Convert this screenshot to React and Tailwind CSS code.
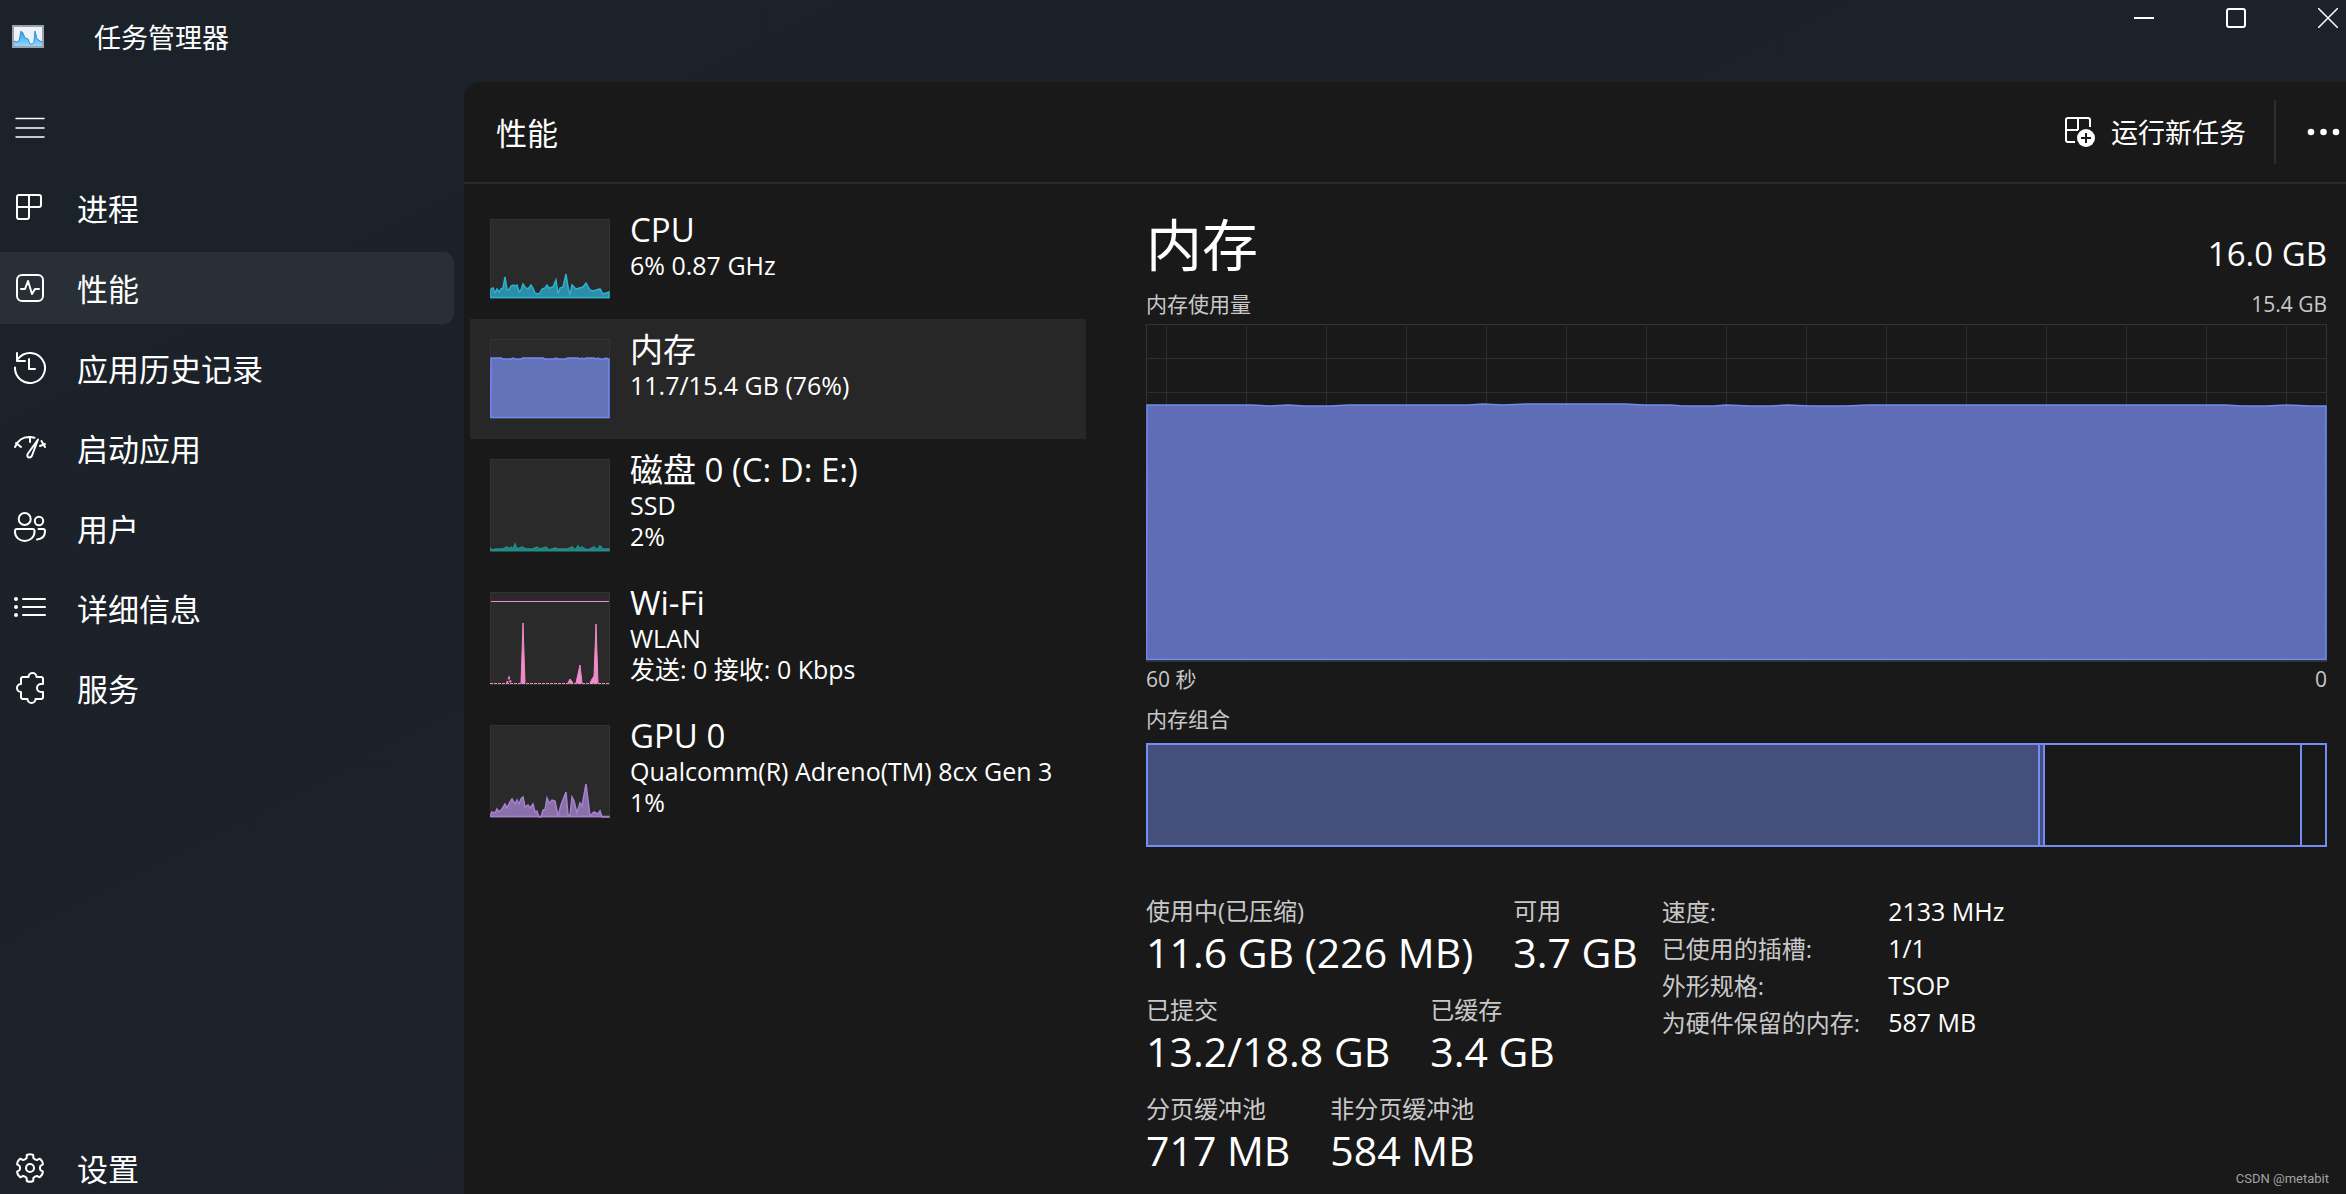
import React, { useState } from 'react'

const CPU_POINTS = '0,71 3,69 5,74 7,70 9,73 11,70 13,69 15,58 17,70 19,71 21,67 23,66 25,67 27,66 29,73 31,71 33,65 35,68 38,70 41,66 43,69 45,74 48,75 50,74 52,70 55,69 57,66 59,69 63,68 66,61 68,75 70,69 73,68 76,55 78,68 80,76 82,66 86,70 93,68 96,64 100,71 103,72 110,70 113,75 119,73'
const MEMORY_POINTS = '1,19 11,19 13,20 21,20 23,19 25,20 31,20 33,19 53,19 55,20 64,20 66,19 68,20 75,20 78,19 88,19 90,20 92,19 94,20 96,19 104,19 106,20 108,19 110,20 114,20 116,19 118,20 119,20'
const DISK_POINTS = '0,89 2,91 6,90 13,90 17,88 19,90 21,88 23,90 25,85 27,90 32,88 36,90 43,90 47,88 50,90 56,88 59,91 65,89 68,90 78,90 82,88 85,91 88,87 90,90 92,88 95,90 98,91 104,88 107,91 110,87 113,90 119,90'
const GPU_POINTS = '0,90 2,87 5,88 7,84 9,87 12,84 15,79 17,83 20,77 22,74 25,79 27,75 29,79 31,74 33,72 35,82 38,80 40,83 43,79 45,87 47,86 49,92 51,92 53,85 55,85 57,73 59,78 62,75 65,76 68,91 71,80 76,67 78,90 80,90 82,72 84,76 87,88 90,78 92,81 96,59 100,91 104,87 108,89 110,86 112,92 119,92'
const USAGE_POINTS = '1,81 106,81 123,82 142,81 158,82 184,82 203,81 322,81 337,80 357,81 380,80 479,80 498,81 525,81 536,82 568,82 580,81 605,82 625,82 641,81 665,82 700,82 722,81 1080,81 1095,82 1120,82 1141,81 1165,82 1180,82'

// toothed outline around (16,16)
const gearPath = () => {
  const at = (deg, r) => {
    const a = (deg * Math.PI) / 180
    return `${(16 + r * Math.cos(a)).toFixed(1)} ${(16 + r * Math.sin(a)).toFixed(1)}`
  }
  let d = ''
  for (let i = 0; i < 6; i++) {
    const t = -90 + i * 60
    d += `${i === 0 ? 'M' : 'L'}${at(t - 19, 10.5)} L${at(t - 14, 13.4)} Q${at(t, 14.6)} ${at(t + 14, 13.4)} L${at(t + 19, 10.5)} Q${at(t + 30, 9.6)} ${at(t + 41, 10.5)} `
  }
  return d + 'Z'
}

function Icon({ children }) {
  return (
    <svg viewBox="0 0 32 32" className="w-8 h-8 shrink-0" fill="none" stroke="currentColor" strokeWidth="2" strokeLinecap="round" strokeLinejoin="round" aria-hidden="true">
      {children}
    </svg>
  )
}

const icons = {
  processes: (
    <Icon>
      <path d="M3 5a2 2 0 0 1 2-2h20a2 2 0 0 1 2 2v8a2 2 0 0 1-2 2H15v10a2 2 0 0 1-2 2H5a2 2 0 0 1-2-2zM15 3v12M3 15h12" />
    </Icon>
  ),
  performance: (
    <Icon>
      <rect x="3" y="3" width="26" height="26" rx="5" />
      <path d="M7 17h4l3-8 4 13 3-5h4" />
    </Icon>
  ),
  history: (
    <Icon>
      <path d="M1 15.5A15 15 0 1 0 4 7M3 1v8h8M15 7v10h6" />
    </Icon>
  ),
  startup: (
    <Icon>
      <path d="M1 15C4 8 9 5 15 5c2 0 4 .3 5.500 .8M16 5v5M2 11l5 4M27.500 9l3.500 6M31 12l-5 2" />
      <path d="M24 7.500L14 21.500c-2.500 4 2.500 5.500 4 2z" />
    </Icon>
  ),
  users: (
    <Icon>
      <circle cx="10.7" cy="7" r="6" />
      <circle cx="25" cy="9" r="4.2" />
      <path d="M3 17h15.500a2 2 0 0 1 2 2v1c0 5-4.500 9-9.800 9S1 25 1 20v-1a2 2 0 0 1 2-2zM24.500 17H29a2 2 0 0 1 2 2v.5c0 4.500-3 7.500-8 8" />
    </Icon>
  ),
  details: (
    <Icon>
      <path d="M9 7h22M9 15h22M9 23h22" />
      <g fill="currentColor" stroke="none">
        <circle cx="2" cy="7" r="2" />
        <circle cx="2" cy="15" r="2" />
        <circle cx="2" cy="23" r="2" />
      </g>
    </Icon>
  ),
  services: (
    <Icon>
      <path d="M9 5h5.500a4 4 0 0 1 8 0H27a2 2 0 0 1 2 2v5h-2a4 4 0 0 0 0 8h2v5a2 2 0 0 1-2 2h-5.500a4 4 0 0 1-8 0H9a2 2 0 0 1-2-2v-5a4 4 0 0 1 0-8V7a2 2 0 0 1 2-2z" />
    </Icon>
  ),
  settings: (
    <Icon>
      <path d={gearPath()} />
      <circle cx="16" cy="16" r="4" />
    </Icon>
  ),
}

const navItems = [
  { id: 'processes', label: '进程' },
  { id: 'performance', label: '性能' },
  { id: 'history', label: '应用历史记录' },
  { id: 'startup', label: '启动应用' },
  { id: 'users', label: '用户' },
  { id: 'details', label: '详细信息' },
  { id: 'services', label: '服务' },
]

const resources = [
  { id: 'cpu', name: 'CPU', lines: ['6% 0.87 GHz'], points: CPU_POINTS, stroke: '#2fb0cf', fill: '#2c8fa8' },
  { id: 'memory', name: '内存', lines: ['11.7/15.4 GB (76%)'], points: MEMORY_POINTS, stroke: '#708af0', fill: '#6472b9' },
  { id: 'disk', name: '磁盘 0 (C: D: E:)', lines: ['SSD', '2%'], points: DISK_POINTS, stroke: '#1f8f8c', fill: '#1f7f7c' },
  { id: 'wifi', name: 'Wi-Fi', lines: ['WLAN', '发送: 0 接收: 0 Kbps'] },
  { id: 'gpu', name: 'GPU 0', lines: ['Qualcomm(R) Adreno(TM) 8cx Gen 3', '1%'], points: GPU_POINTS, stroke: '#a482cf', fill: '#8a70a8' },
]

const stats = [
  [['使用中(已压缩)', '11.6 GB (226 MB)'], ['可用', '3.7 GB']],
  [['已提交', '13.2/18.8 GB'], ['已缓存', '3.4 GB']],
  [['分页缓冲池', '717 MB'], ['非分页缓冲池', '584 MB']],
]

const details = [
  ['速度:', '2133 MHz'],
  ['已使用的插槽:', '1/1'],
  ['外形规格:', 'TSOP'],
  ['为硬件保留的内存:', '587 MB'],
]

const composition = [
  { id: 'used', size: 894, className: 'bg-[#454f7b]' },
  { id: 'modified', size: 5, className: 'bg-[#454f7b]' },
  { id: 'standby', size: 257, className: '' },
  { id: 'free', size: 25, className: '' },
]
const compositionTotal = composition.reduce((sum, part) => sum + part.size, 0)

function Thumbnail({ item }) {
  const h = item.lines.length > 1 ? 93 : 80
  return (
    <svg width="120" height={h} viewBox={`0 0 120 ${h}`} className="shrink-0" aria-hidden="true">
      <rect x="0.5" y="0.5" width="119" height={h - 1} fill="#2a2a2a" stroke="#333333" />
      {item.points ? (
        <>
          <polygon points={`0,${h - 1} ${item.points} 119,${h - 1}`} fill={item.fill} />
          <polyline points={`0.5,${h - 1.5} ${item.points} 119,${h - 1.5} 0.5,${h - 1.5}`} fill="none" stroke={item.stroke} strokeWidth="1.5" />
        </>
      ) : (
        <g fill="#ee8bc8" stroke="#ee8bc8">
          <path d="M1 9.500h118" />
          <path d="M0 91.500h120" strokeDasharray="3 1" />
          <path d="M17 91l2-5 2 5" fill="none" strokeWidth="2" strokeDasharray="2 2" />
          <path d="M31 91l2-60 2 60zM78 91l2-4 3 4zM86 91l4-18 2 18zM100 91l2-4 2-3 2-52 2 59z" />
        </g>
      )}
    </svg>
  )
}

function ResourceItem({ item, active, onSelect }) {
  return (
    <button
      onClick={() => onSelect(item.id)}
      className={`flex w-full gap-5 pl-5 text-left ${item.lines.length > 1 ? 'h-[133px]' : 'h-[120px]'} ${active ? 'bg-[#272727]' : ''}`}
    >
      <span className="pt-5">
        <Thumbnail item={item} />
      </span>
      <span className="block pt-[11px] whitespace-nowrap">
        <span className="block text-[33px] leading-[40px]">{item.name}</span>
        {item.lines.map((line) => (
          <span key={line} className="block text-[25px] leading-[31px]">{line}</span>
        ))}
      </span>
    </button>
  )
}

function UsageChart() {
  const columns = Array.from({ length: 15 }, (_, i) => 20.5 + i * 80)
  const rows = Array.from({ length: 9 }, (_, i) => Math.round((i + 1) * 33.8) + 0.5)
  return (
    <svg viewBox="0 0 1181 338" preserveAspectRatio="none" className="block w-full h-[338px]" aria-label="内存使用量" role="img">
      <rect x="0.5" y="0.5" width="1180" height="337" fill="none" stroke="#333333" />
      <g stroke="#2d2d2d">
        {columns.map((x) => <line key={x} x1={x} x2={x} y1="0" y2="337" />)}
        {rows.map((y) => <line key={y} x1="0" x2="1181" y1={y} y2={y} />)}
      </g>
      <polygon points={`0,336 ${USAGE_POINTS} 1180,336`} fill="#6b7cd2" fillOpacity="0.85" />
      <polyline points={`0.5,335.5 ${USAGE_POINTS} 1180,335.5 0.5,335.5`} fill="none" stroke="#708af0" strokeWidth="1.5" />
    </svg>
  )
}

function App() {
  const [page, setPage] = useState('performance')
  const [resource, setResource] = useState('memory')

  return (
    <div className={'flex h-screen flex-col overflow-hidden bg-linear-to-br from-[#1b2229] to-[#1f2029] text-white font-["Open_Sans","Noto_Sans_CJK_SC",sans-serif]'}>
      <header className="flex h-[82px] shrink-0 items-start justify-between">
        <div className="flex items-center gap-[50px] pl-3 pt-4">
          <svg width="32" height="23" viewBox="0 0 32 23" aria-hidden="true">
            <defs>
              <linearGradient id="appFill" x1="0" y1="0" x2="0" y2="1">
                <stop offset="0" stopColor="#2f9be6" />
                <stop offset="1" stopColor="#8fd8fb" />
              </linearGradient>
            </defs>
            <rect width="32" height="23" fill="#9aa3ad" />
            <rect x="2" y="2" width="28" height="19" fill="#eef1f5" />
            <path d="M2 16l3 1 2-1 2-10 2 2 2 5 3 1 2 5h2l2-2 1-11 2 8 3 2 2 1v4H2z" fill="url(#appFill)" />
            <path d="M2 16l3 1 2-1 2-10 2 2 2 5 3 1 2 5h2l2-2 1-11 2 8 3 2 2 1" fill="none" stroke="#2c93dd" />
          </svg>
          <h1 className="pt-1 text-[27px] leading-[36px]">任务管理器</h1>
        </div>
        <div className="flex gap-[72px] pr-2 pt-2">
          <button aria-label="最小化">
            <svg width="20" height="20" viewBox="0 0 20 20" stroke="currentColor" strokeWidth="2"><path d="M0 10h20" /></svg>
          </button>
          <button aria-label="最大化">
            <svg width="20" height="20" viewBox="0 0 20 20" fill="none" stroke="currentColor" strokeWidth="2"><rect x="1" y="1" width="18" height="18" rx="2" /></svg>
          </button>
          <button aria-label="关闭">
            <svg width="20" height="20" viewBox="0 0 20 20" stroke="currentColor" strokeWidth="1.5"><path d="M0 0l20 20M20 0L0 20" /></svg>
          </button>
        </div>
      </header>

      <div className="flex min-h-0 flex-1">
        <nav className="flex w-[464px] shrink-0 flex-col pt-[10px]">
          <button aria-label="导航" className="mb-2 flex h-[72px] items-center pl-[14px]">
            <Icon>
              <path d="M2 6.500h28M2 16h28M2 25h28" strokeWidth="1.500" />
            </Icon>
          </button>
          <div className="flex flex-col gap-2">
            {navItems.map((item) => (
              <button
                key={item.id}
                onClick={() => setPage(item.id)}
                className={`mr-[10px] flex h-[72px] items-center gap-[31px] rounded-r-[10px] pl-[14px] text-[31px] ${page === item.id ? 'bg-[#282f36]' : ''}`}
              >
                {icons[item.id]}
                <span className="pt-[3px]">{item.label}</span>
              </button>
            ))}
          </div>
          <button className="mt-auto mr-[10px] flex h-[52px] items-center gap-[31px] pl-[14px] text-[31px]">
            {icons.settings}
            <span className="pt-[3px]">设置</span>
          </button>
        </nav>

        <main className="flex min-w-0 flex-1 flex-col rounded-tl-[16px] bg-[#191919]">
          <div className="flex h-[102px] shrink-0 items-center justify-between border-b-2 border-[#2b2b2d] pl-8">
            <h2 className="pt-[3px] text-[31px]">性能</h2>
            <div className="flex items-center pr-[5px]">
              <button className="flex items-center gap-4 text-[27px]">
                <svg width="30" height="30" viewBox="0 0 30 30" fill="none" stroke="currentColor" strokeWidth="2" aria-hidden="true">
                  <path d="M25 10V3a2 2 0 0 0-2-2H3a2 2 0 0 0-2 2v20a2 2 0 0 0 2 2h7M13 1v12M1 13h12" />
                  <circle cx="21" cy="21" r="9" fill="currentColor" stroke="none" />
                  <path d="M21 16v10M16 21h10" stroke="#191919" />
                </svg>
                <span className="pt-[3px]">运行新任务</span>
              </button>
              <span className="ml-7 h-16 w-[2px] bg-[#2d2d2d]" />
              <button aria-label="更多选项" className="ml-[31px]">
                <svg width="34" height="8" viewBox="0 0 34 8" fill="currentColor"><circle cx="4" cy="4" r="3.300" /><circle cx="16.500" cy="4" r="3.300" /><circle cx="29" cy="4" r="3.300" /></svg>
              </button>
            </div>
          </div>

          <div className="flex min-h-0 flex-1">
            <div className="ml-[6px] w-[616px] shrink-0 pt-[15px]">
              {resources.map((item) => (
                <ResourceItem key={item.id} item={item} active={resource === item.id} onSelect={setResource} />
              ))}
            </div>

            <section className="ml-[60px] mr-[19px] min-w-0 flex-1 pt-5">
              <div className="mb-[5px] flex items-baseline justify-between">
                <h2 className="text-[56px] leading-[80px]">内存</h2>
                <span className="text-[33px]">16.0 GB</span>
              </div>
              <div className="flex justify-between text-[21px] leading-[30px] text-[#c8c8c8]">
                <span>内存使用量</span>
                <span>15.4 GB</span>
              </div>
              <div className="mt-[5px]">
                <UsageChart />
              </div>
              <div className="mt-[2px] flex justify-between text-[21px] leading-[30px] text-[#c8c8c8]">
                <span>60 秒</span>
                <span>0</span>
              </div>
              <div className="mt-[10px] text-[21px] leading-[30px] text-[#c8c8c8]">内存组合</div>
              <div className="mt-[9px] flex h-[104px] border-y-2 border-l-2 border-[#758cf5]">
                {composition.map((part) => (
                  <div
                    key={part.id}
                    className={`border-r-2 border-[#758cf5] ${part.className}`}
                    style={{ width: `${(part.size / compositionTotal) * 100}%` }}
                  />
                ))}
              </div>

              <div className="mt-[46px] flex gap-6 whitespace-nowrap">
                <div className="flex flex-col gap-[17px]">
                  {stats.map((row) => (
                    <dl key={row[0][0]} className="flex gap-10">
                      {row.map(([label, value]) => (
                        <div key={label}>
                          <dt className="text-[24px] leading-[36px] text-[#c8c8c8]">{label}</dt>
                          <dd className="text-[41px] leading-[46px]">{value}</dd>
                        </div>
                      ))}
                    </dl>
                  ))}
                </div>
                <table className="self-start text-left leading-[37px]">
                  <tbody>
                    {details.map(([label, value]) => (
                      <tr key={label}>
                        <th scope="row" className="p-0 pr-7 text-[24px] font-normal text-[#c8c8c8]">{label}</th>
                        <td className="p-0 text-[25px]">{value}</td>
                      </tr>
                    ))}
                  </tbody>
                </table>
              </div>
            </section>
          </div>
        </main>
      </div>

      <span className={'absolute right-[17px] bottom-[5px] text-[13px] leading-[20px] text-[#a3a3a3] font-["Roboto",sans-serif]'}>CSDN @metabit</span>
    </div>
  )
}

export default App
